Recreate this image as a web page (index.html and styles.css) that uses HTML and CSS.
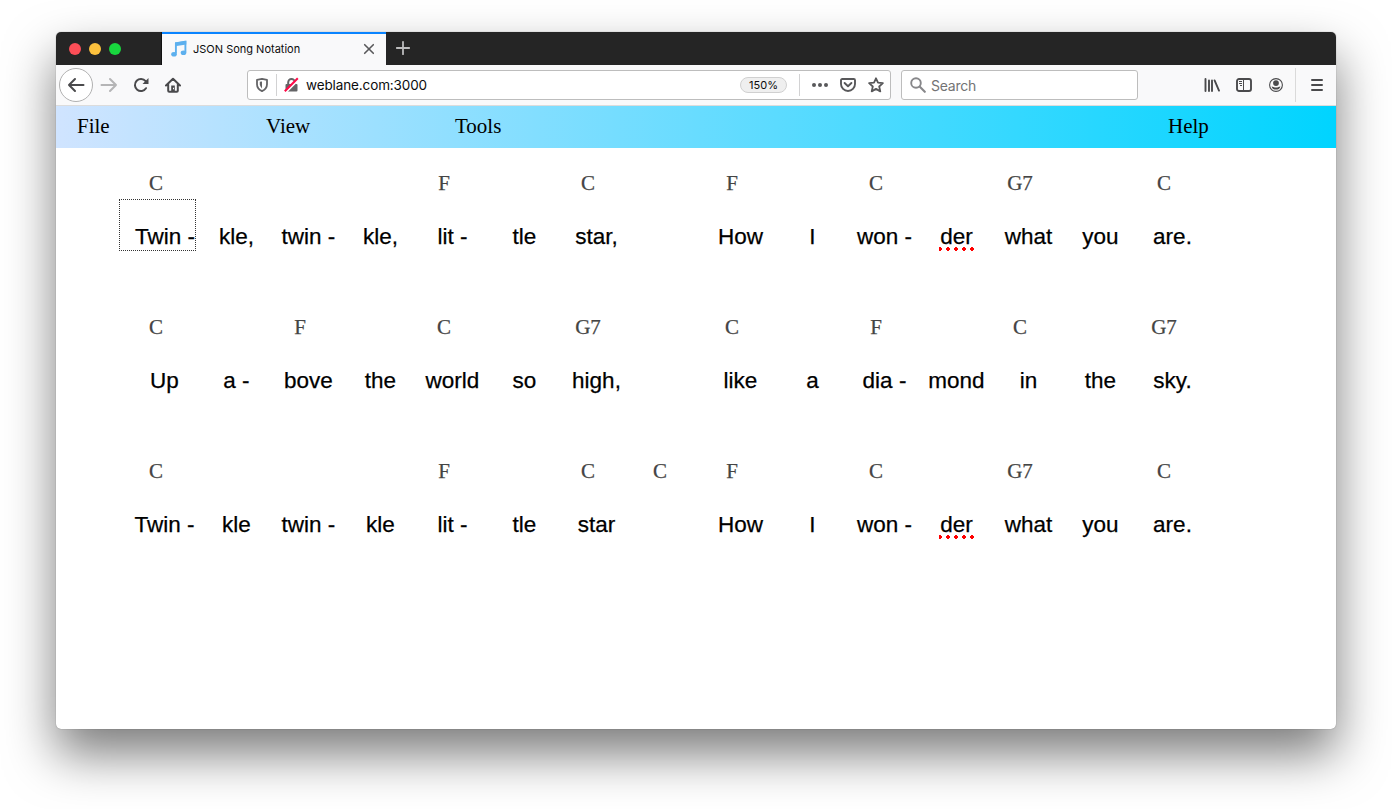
FILE: index.html
```html
<!DOCTYPE html>
<html lang="en">
<head>
<meta charset="utf-8">
<title>JSON Song Notation</title>
<link rel="stylesheet" href="styles.css">
</head>
<body>
<div class="window">
  <div class="tabs">
    <div class="lights"><i class="light red"></i><i class="light yellow"></i><i class="light green"></i></div>
    <div class="tab">
      <svg class="note" width="18" height="18" viewBox="0 0 18 18"><path d="M5.9 13.5V3.2L15.4 1.6v10.8" fill="none" stroke="#5db0ee" stroke-width="1.9"/><path d="M5 2.6 16.3.9v3.6L5 6.2z" fill="#5db0ee"/><ellipse cx="4" cy="14.2" rx="2.8" ry="2.3" fill="#5db0ee"/><ellipse cx="13.5" cy="12.8" rx="2.8" ry="2.3" fill="#5db0ee"/></svg>
      <span class="title">JSON Song Notation</span>
      <svg class="close" width="12" height="12" viewBox="0 0 12 12"><path d="M1.7 1.7l8.6 8.6M10.3 1.7l-8.6 8.6" stroke="#58585a" stroke-width="1.6" stroke-linecap="round"/></svg>
    </div>
    <svg class="plus" width="16" height="16" viewBox="0 0 16 16"><path d="M8 1.8v12.4M1.8 8h12.4" stroke="#bdbdbe" stroke-width="1.8" stroke-linecap="round"/></svg>
  </div>
  <div class="toolbar">
    <div class="back"><svg width="18" height="16" viewBox="0 0 18 16"><path d="M16.5 8H2M8 2 2 8l6 6" fill="none" stroke="#4a4a4c" stroke-width="2" stroke-linecap="round" stroke-linejoin="round"/></svg></div>
    <svg class="forward" width="18" height="16" viewBox="0 0 18 16"><path d="M1.5 8H16M10 2l6 6-6 6" fill="none" stroke="#b5b5b6" stroke-width="2" stroke-linecap="round" stroke-linejoin="round"/></svg>
    <svg class="reload" width="16" height="16" viewBox="0 0 16 16"><path d="M13 11.2A6 6 0 1 1 12.6 4.2" fill="none" stroke="#4a4a4c" stroke-width="2" stroke-linecap="round"/><path d="M15.5 1v6h-6z" fill="#4a4a4c"/></svg>
    <svg class="home" width="16" height="16" viewBox="0 0 16 16"><path d="M1 8.5 8 1.7l7 6.8M3.2 7.5v6.3q0 1 1 1h7.6q1 0 1-1V7.5" fill="none" stroke="#4a4a4c" stroke-width="2" stroke-linecap="round" stroke-linejoin="round"/><path d="M6.2 8.4h3.6v6H6.2z" fill="#4a4a4c"/><path d="M8 10.8h1v1.4H8z" fill="#fff"/></svg>
    <div class="url">
      <svg class="shield" width="14" height="16" viewBox="0 0 14 16"><path d="M7 1.8 12 2.9v4.3q0 4.5-5 6.9-5-2.4-5-6.9V2.9z" fill="none" stroke="#646466" stroke-width="1.8" stroke-linejoin="round"/><path d="M7 4.4v7q-2.2-1.8-2.2-4.2V4.8z" fill="#646466"/></svg>
      <i class="rule"></i>
      <svg class="lock" width="15" height="16" viewBox="0 0 15 16"><path d="M4.2 8V5.2a3.3 3.3 0 0 1 6.6 0V8" fill="none" stroke="#646466" stroke-width="2"/><rect x="1.5" y="7" width="12" height="7.5" rx="1" fill="#646466"/><path d="M2.2 15 15 2.2" stroke="#fff" stroke-width="2"/><path d="M.8 14.2 13.8 1.2" stroke="#ff0a48" stroke-width="2"/></svg>
      <span class="address">weblane.com:3000</span>
      <span class="zoom">150%</span>
      <i class="rule rule-right"></i>
      <svg class="dots" width="18" height="6" viewBox="0 0 18 6"><g fill="#58585a"><circle cx="3" cy="3" r="2"/><circle cx="9" cy="3" r="2"/><circle cx="15" cy="3" r="2"/></g></svg>
      <svg class="pocket" width="16" height="14" viewBox="0 0 16 14"><path d="M2.3 1h11.4q1.3 0 1.3 1.3V6A7 7 0 0 1 1 6V2.3Q1 1 2.3 1z" fill="none" stroke="#58585a" stroke-width="1.9"/><path d="M4.6 5 8 8.2 11.4 5" fill="none" stroke="#58585a" stroke-width="1.9" stroke-linecap="round" stroke-linejoin="round"/></svg>
      <svg class="star" width="16" height="16" viewBox="0 0 16 16"><path d="M8 1.3 10 5.7 14.9 6.2 11.2 9.5 12.3 14.4 8 11.9 3.7 14.4 4.8 9.5 1.1 6.2 6 5.7z" fill="none" stroke="#58585a" stroke-width="1.8" stroke-linejoin="round"/></svg>
    </div>
    <div class="search">
      <svg width="16" height="16" viewBox="0 0 16 16"><circle cx="6" cy="6" r="4.8" fill="none" stroke="#87878a" stroke-width="1.9"/><path d="m9.6 9.6 5.2 5.2" stroke="#87878a" stroke-width="2.1" stroke-linecap="round"/></svg>
      <span>Search</span>
    </div>
    <svg class="library" width="16" height="16" viewBox="0 0 16 16"><path d="M1.5 2v12M5 3.5V14M8 3.5V14M10.6 3.4 15 13.6" fill="none" stroke="#4a4a4c" stroke-width="1.9" stroke-linecap="round"/></svg>
    <svg class="sidebar" width="16" height="14" viewBox="0 0 16 14"><rect x="1" y="1" width="14" height="12" rx="2" fill="none" stroke="#4a4a4c" stroke-width="1.9"/><path d="M7.5 1v12M3 3.5h3M3 5.5h3M4 7.5h2" stroke="#4a4a4c" stroke-width="1"/></svg>
    <svg class="account" width="14" height="14" viewBox="0 0 14 14"><circle cx="7" cy="7" r="6.4" fill="none" stroke="#4a4a4c" stroke-width="1.1"/><circle cx="7" cy="5.1" r="2.9" fill="#4a4a4c"/><path d="M2.6 8.4q1.2 0 1.9.6 2.5 1.2 5 0 .7-.6 1.9-.6-.9 3.2-4.4 3.2T2.6 8.4z" fill="#4a4a4c"/></svg>
    <div class="menu"><svg width="12" height="14" viewBox="0 0 12 14"><path d="M1 2h10M1 7h10M1 12h10" stroke="#4a4a4c" stroke-width="2" stroke-linecap="round"/></svg></div>
  </div>
  <nav class="menubar"><span>File</span><span>View</span><span>Tools</span><span class="help">Help</span></nav>
  <main class="song">
    <section class="line">
      <div class="chords"><span>C</span><span></span><span></span><span></span><span>F</span><span></span><span>C</span><span></span><span>F</span><span></span><span>C</span><span></span><span>G7</span><span></span><span>C</span></div>
      <div class="lyrics"><span class="focused">Twin -</span><span>kle,</span><span>twin -</span><span>kle,</span><span>lit -</span><span>tle</span><span>star,</span><span></span><span>How</span><span>I</span><span>won -</span><span><b class="misspelt">der</b></span><span>what</span><span>you</span><span>are.</span></div>
    </section>
    <section class="line">
      <div class="chords"><span>C</span><span></span><span>F</span><span></span><span>C</span><span></span><span>G7</span><span></span><span>C</span><span></span><span>F</span><span></span><span>C</span><span></span><span>G7</span></div>
      <div class="lyrics"><span>Up</span><span>a -</span><span>bove</span><span>the</span><span>world</span><span>so</span><span>high,</span><span></span><span>like</span><span>a</span><span>dia -</span><span>mond</span><span>in</span><span>the</span><span>sky.</span></div>
    </section>
    <section class="line">
      <div class="chords"><span>C</span><span></span><span></span><span></span><span>F</span><span></span><span>C</span><span>C</span><span>F</span><span></span><span>C</span><span></span><span>G7</span><span></span><span>C</span></div>
      <div class="lyrics"><span>Twin -</span><span>kle</span><span>twin -</span><span>kle</span><span>lit -</span><span>tle</span><span>star</span><span></span><span>How</span><span>I</span><span>won -</span><span><b class="misspelt">der</b></span><span>what</span><span>you</span><span>are.</span></div>
    </section>
  </main>
</div>
</body>
</html>
```
FILE: styles.css
```css
* { box-sizing: border-box; }
html, body { height: 100%; }
body { margin: 0; padding: 32px 56px 80px; background: #fff; overflow: hidden; font-family: Inter, sans-serif; }
svg { display: block; flex: none; }
.window { width: 1280px; height: 697px; border-radius: 5px; overflow: hidden; background: #fff; box-shadow: 0 0 1px rgba(0,0,0,.5), 0 25px 50px rgba(0,0,0,.52); }

.tabs { display: flex; height: 33px; background: #252525; }
.lights { width: 106px; padding: 11px 0 0 13px; display: flex; gap: 8px; border-right: 1px solid #111; }
.light { width: 12px; height: 12px; border-radius: 50%; }
.red { background: #fc4e57; }
.yellow { background: #fcc13d; }
.green { background: #18d63e; }
.tab { width: 224px; border-top: 2px solid #0a84ff; background: #f9f9fa; display: flex; align-items: center; padding: 0 11px 1px 8px; }
.title { margin-left: 5px; font-size: 11px; color: #0c0c0d; white-space: nowrap; }
.close { margin-left: auto; }
.plus { margin: 8px 0 0 9px; }

.toolbar { height: 41px; display: flex; align-items: center; background: #f9f9fa; border-bottom: 1px solid #dcdcdc; padding-left: 3px; }
.back { width: 34px; height: 34px; border: 1px solid #b1b1b1; border-radius: 50%; background: #fff; display: flex; align-items: center; justify-content: center; }
.forward { margin-left: 7px; }
.reload { margin-left: 15px; }
.home { margin-left: 16px; }
.url, .search { height: 30px; border: 1px solid #bdbdbd; border-radius: 3px; background: #fff; display: flex; align-items: center; }
.url { width: 644px; margin-left: 66px; padding-left: 7px; }
.rule { width: 1px; height: 22px; background: #d2d2d3; margin-left: 7px; }
.lock { margin-left: 7px; }
.address { margin-left: 7px; font-size: 13.5px; letter-spacing: -.12px; color: #0c0c0d; }
.zoom { margin-left: auto; width: 47px; height: 16px; border: 1px solid #d0d0d0; border-radius: 8px; background: #efefef; font-size: 11px; line-height: 14px; text-align: center; color: #0c0c0d; }
.rule-right { margin-left: 12px; }
.dots { margin-left: 11px; }
.pocket { margin-left: 11px; }
.star { margin: 0 6px 0 12px; }
.search { width: 237px; margin-left: 10px; padding-left: 8px; font-size: 14px; color: #737374; }
.search span { margin-left: 5px; letter-spacing: -.25px; }
.library { margin-left: 66px; }
.sidebar { margin-left: 16px; }
.account { margin-left: 17px; }
.menu { margin-left: 12px; height: 34px; border-left: 1px solid #dadada; padding-left: 15px; display: flex; align-items: center; }

.menubar { height: 42px; padding-left: 21px; display: grid; grid-template-columns: 189px 189px 713px 1fr; font: 21px/41px "Liberation Serif", serif; color: #000; background: linear-gradient(90deg, #d0e4ff, #00d4ff); }

.song { padding: 20px 0 0 73px; }
.line { height: 144px; }
.chords, .lyrics { display: grid; grid-template-columns: repeat(15, 72px); text-align: center; }
.chords { width: 1080px; height: 31px; margin-left: -9px; font: 21px/30px "Liberation Serif", serif; color: #444; -webkit-text-stroke: .25px #444; }
.lyrics { height: 52px; font: 22.5px/24px "Liberation Sans", sans-serif; color: #000; -webkit-text-stroke: .25px #000; }
.lyrics span { padding: 26px 1px 0 0; white-space: nowrap; }
.lyrics .focused { width: 77px; margin-left: -10px; padding: 25px 0 0 15px; border: 1px dotted #333; text-align: left; }
.misspelt { display: inline-block; height: 26px; margin: 0 -1px; padding: 0 1px; font-weight: 400; background: radial-gradient(circle, #f00 1.6px, transparent 2px) -3px 21.5px / 8px 4px repeat-x; }
```
